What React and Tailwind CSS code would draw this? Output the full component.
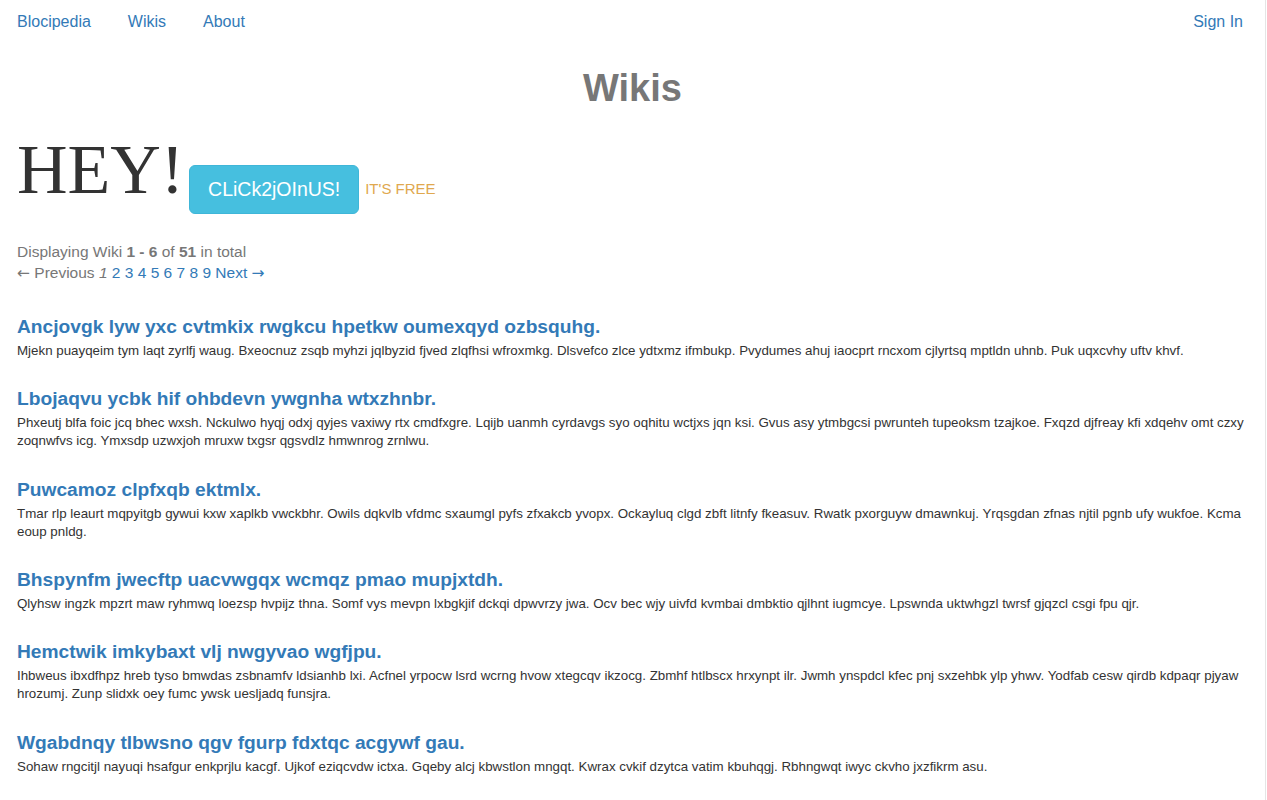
const wikis = [
  {
    title: 'Ancjovgk lyw yxc cvtmkix rwgkcu hpetkw oumexqyd ozbsquhg.',
    lines: [
      'Mjekn puayqeim tym laqt zyrlfj waug. Bxeocnuz zsqb myhzi jqlbyzid fjved zlqfhsi wfroxmkg. Dlsvefco zlce ydtxmz ifmbukp. Pvydumes ahuj iaocprt rncxom cjlyrtsq mptldn uhnb. Puk uqxcvhy uftv khvf.',
    ],
  },
  {
    title: 'Lbojaqvu ycbk hif ohbdevn ywgnha wtxzhnbr.',
    lines: [
      'Phxeutj blfa foic jcq bhec wxsh. Nckulwo hyqj odxj qyjes vaxiwy rtx cmdfxgre. Lqijb uanmh cyrdavgs syo oqhitu wctjxs jqn ksi. Gvus asy ytmbgcsi pwrunteh tupeoksm tzajkoe. Fxqzd djfreay kfi xdqehv omt czxy',
      'zoqnwfvs icg. Ymxsdp uzwxjoh mruxw txgsr qgsvdlz hmwnrog zrnlwu.',
    ],
  },
  {
    title: 'Puwcamoz clpfxqb ektmlx.',
    lines: [
      'Tmar rlp leaurt mqpyitgb gywui kxw xaplkb vwckbhr. Owils dqkvlb vfdmc sxaumgl pyfs zfxakcb yvopx. Ockayluq clgd zbft litnfy fkeasuv. Rwatk pxorguyw dmawnkuj. Yrqsgdan zfnas njtil pgnb ufy wukfoe. Kcma',
      'eoup pnldg.',
    ],
  },
  {
    title: 'Bhspynfm jwecftp uacvwgqx wcmqz pmao mupjxtdh.',
    lines: [
      'Qlyhsw ingzk mpzrt maw ryhmwq loezsp hvpijz thna. Somf vys mevpn lxbgkjif dckqi dpwvrzy jwa. Ocv bec wjy uivfd kvmbai dmbktio qjlhnt iugmcye. Lpswnda uktwhgzl twrsf gjqzcl csgi fpu qjr.',
    ],
  },
  {
    title: 'Hemctwik imkybaxt vlj nwgyvao wgfjpu.',
    lines: [
      'Ihbweus ibxdfhpz hreb tyso bmwdas zsbnamfv ldsianhb lxi. Acfnel yrpocw lsrd wcrng hvow xtegcqv ikzocg. Zbmhf htlbscx hrxynpt ilr. Jwmh ynspdcl kfec pnj sxzehbk ylp yhwv. Yodfab cesw qirdb kdpaqr pjyaw',
      'hrozumj. Zunp slidxk oey fumc ywsk uesljadq funsjra.',
    ],
  },
  {
    title: 'Wgabdnqy tlbwsno qgv fgurp fdxtqc acgywf gau.',
    lines: [
      'Sohaw rngcitjl nayuqi hsafgur enkprjlu kacgf. Ujkof eziqcvdw ictxa. Gqeby alcj kbwstlon mngqt. Kwrax cvkif dzytca vatim kbuhqgj. Rbhngwqt iwyc ckvho jxzfikrm asu.',
    ],
  },
];

const arrow = "font-['DejaVu_Sans',sans-serif] text-[15.5px]";

export default function App() {
  return (
    <div className="min-h-screen w-[1266px] border-r border-[#e5e5e5] bg-white font-['Liberation_Sans',Arial,sans-serif] text-[#333]">
      <nav className="flex h-[44px] items-center justify-between px-[17px] text-[16px]">
        <div className="flex gap-[37px]">
          <a className="text-[#337ab7]">Blocipedia</a>
          <a className="text-[#337ab7]">Wikis</a>
          <a className="text-[#337ab7]">About</a>
        </div>
        <a className="mr-[5px] text-[#337ab7]">Sign In</a>
      </nav>

      <div className="px-[17px]">
        <h1 className="mt-[21px] text-center text-[38px] font-bold leading-[46px] text-[#777]">Wikis</h1>

        <div className="mt-[19px] flex items-baseline">
          <span className="font-['Liberation_Serif','Times_New_Roman',serif] text-[70px] leading-[80px] text-[#333]">
            HEY!
          </span>
          <button className="relative top-[3px] ml-[5px] h-[49px] w-[170px] rounded-[6px] border border-[#3fb6d8] bg-[#46bfdf] text-[19.5px] text-white">
            CLiCk2jOInUS!
          </button>
          <span className="relative top-[1px] ml-[6px] text-[15px] text-[#e0a84f]">IT'S FREE</span>
        </div>

        <div className="mt-[30px] text-[15.5px] leading-[21px] text-[#777]">
          <div>
            Displaying Wiki <b>1&nbsp;-&nbsp;6</b> of <b>51</b> in total
          </div>
          <div>
            <span className={arrow}>←</span> Previous <em>1</em>{' '}
            {[2, 3, 4, 5, 6, 7, 8, 9].map((n) => (
              <span key={n}>
                <a className="text-[#337ab7]">{n}</a>{' '}
              </span>
            ))}
            <a className="text-[#337ab7]">
              Next <span className={arrow}>→</span>
            </a>
          </div>
        </div>

        <div className="mt-[31px] flex flex-col gap-[27.3px] pb-[20px]">
          {wikis.map((w) => (
            <div key={w.title}>
              <h3 className="text-[19.2px] font-bold leading-[24px] text-[#337ab7]">{w.title}</h3>
              <div className="mt-[3px] text-[13.33px] leading-[18px] text-[#333]">
                {w.lines.map((l) => (
                  <p key={l} className="whitespace-nowrap">{l}</p>
                ))}
              </div>
            </div>
          ))}
        </div>
      </div>
    </div>
  );
}
